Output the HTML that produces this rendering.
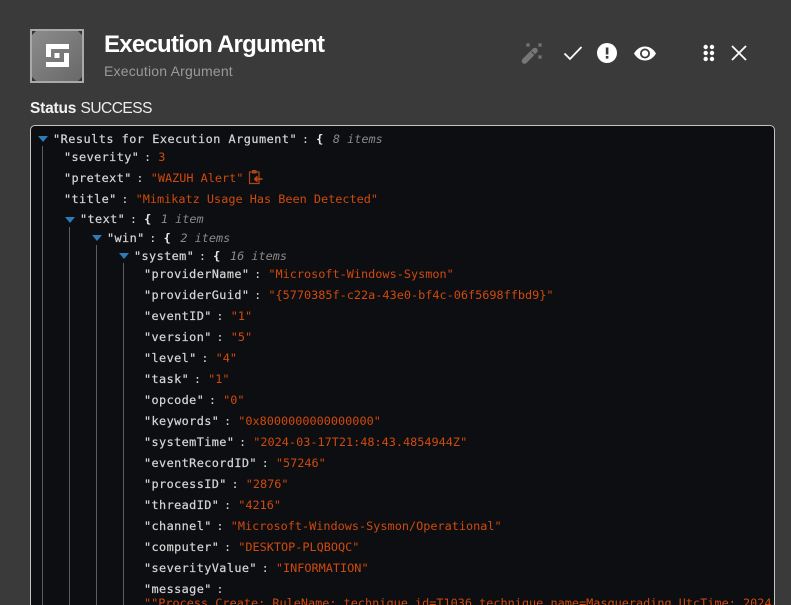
<!DOCTYPE html>
<html><head><meta charset="utf-8">
<style>
html,body{margin:0;padding:0;width:791px;height:605px;overflow:hidden;background:#3a3a3a}
body{position:relative;font-family:"Liberation Sans",sans-serif}
.abs{position:absolute}
#card{position:absolute;left:30px;top:125px;width:743px;height:500px;background:#0d0e11;border:1px solid #c4c4c4;border-radius:5px}
.l{position:absolute;white-space:pre;font-family:"DejaVu Sans Mono","Liberation Mono",monospace;font-size:11.85px;line-height:16px;height:16px;color:#d6d6d6}
.k{letter-spacing:.4px;-webkit-text-stroke:.2px #d6d6d6;margin-right:-2.5px}
.s,.n{color:#cf4a0e}
.i{color:#8a8a8a;font-style:italic;margin-left:2.5px}
.br{font-weight:700;color:#e8e8e8}
.t{position:absolute;width:1px;background:#5c5c5c}
.c{position:absolute;width:0;height:0;border-left:5.5px solid transparent;border-right:5.5px solid transparent;border-top:6px solid #2b7cb8}
</style></head><body>

<!-- logo tile -->
<div class="abs" style="left:30px;top:29px;width:50px;height:50px;border:2px solid #a9a9a9;background:linear-gradient(135deg,#8c8c8c,#686868)"></div>
<svg class="abs" style="left:30px;top:29px" width="54" height="54" viewBox="0 0 54 54">
<path d="M2 2h4l-4 4zM52 2v4l-4-4zM2 52v-4l4 4zM52 52h-4l4-4z" fill="#333"/>
<path d="M16 15h23v5H21v8h-5z M34 24h5v14H16v-5h18z" fill="#fff"/>
<rect x="24.500" y="24" width="5" height="5" fill="#fff"/>
</svg>

<!-- heading -->
<div class="abs" style="left:104px;top:30px;font-size:24px;line-height:30px;font-weight:700;color:#fff;white-space:pre;letter-spacing:-0.75px">Execution Argument</div>
<div class="abs" style="left:104px;top:62px;font-size:14px;line-height:18px;color:#9a9a9a;white-space:pre;letter-spacing:0.2px">Execution Argument</div>
<div class="abs" style="left:30px;top:100px;font-size:15.5px;line-height:18px;color:#eee;white-space:pre"><span style="font-weight:700;color:#f2f2f2;letter-spacing:-0.2px">Status</span> <span style="letter-spacing:-0.5px">SUCCESS</span></div>

<!-- toolbar icons -->
<svg class="abs" style="left:520px;top:41px" width="26" height="26" viewBox="0 0 26 26">
<path d="M4.500 20 15 9.500" fill="none" stroke="#777" stroke-width="5.500" stroke-linecap="round"/>
<path d="M11.500 10.500l4 4" stroke="#3a3a3a" stroke-width="1"/>
<g stroke="#777" stroke-width="1.500"><path d="M6.500 2.500l3 3M9.500 2.500l-3 3M18.500 2.500l3 3M21.500 2.500l-3 3M18.500 14.500l3 3M21.500 14.500l-3 3"/></g>
</svg>
<svg class="abs" style="left:562px;top:44px" width="22" height="18" viewBox="0 0 22 18">
<path d="M2.500 9.500 8 15 19.500 3" fill="none" stroke="#fff" stroke-width="1.800"/>
</svg>
<svg class="abs" style="left:597px;top:43px" width="20" height="20" viewBox="0 0 20 20">
<circle cx="10" cy="10" r="10" fill="#fff"/>
<rect x="8.800" y="4.500" width="2.600" height="7" fill="#3a3a3a"/>
<rect x="8.800" y="13" width="2.600" height="2.600" fill="#3a3a3a"/>
</svg>
<svg class="abs" style="left:634px;top:44px" width="22" height="18" viewBox="0 0 22 18">
<path d="M0 9.500C3 4.500 7 2.500 11 2.500S19 4.500 22 9.500c-3 5-7 7-11 7S3 14.500 0 9.500z" fill="#fff"/>
<circle cx="11" cy="9.500" r="5" fill="#3a3a3a"/>
<circle cx="11" cy="9.500" r="3.200" fill="#fff"/>
</svg>
<svg class="abs" style="left:702px;top:44px" width="14" height="18" viewBox="0 0 14 18">
<g fill="#fff"><circle cx="3.700" cy="3" r="2.200"/><circle cx="10" cy="3" r="2.200"/><circle cx="3.700" cy="9" r="2.200"/><circle cx="10" cy="9" r="2.200"/><circle cx="3.700" cy="15" r="2.200"/><circle cx="10" cy="15" r="2.200"/></g>
</svg>
<svg class="abs" style="left:730px;top:44px" width="18" height="18" viewBox="0 0 18 18">
<path d="M2 2l14 14M16 2 2 16" fill="none" stroke="#fff" stroke-width="1.800"/>
</svg>

<!-- card -->
<div id="card"></div>

<!-- tree lines -->
<div class="t" style="left:42px;top:146px;height:459px"></div>
<div class="t" style="left:69px;top:227px;height:378px"></div>
<div class="t" style="left:96px;top:245px;height:360px"></div>
<div class="t" style="left:123px;top:263px;height:342px"></div>

<!-- carets -->
<div class="c" style="left:38px;top:136px"></div>
<div class="c" style="left:65px;top:217px"></div>
<div class="c" style="left:92px;top:235px"></div>
<div class="c" style="left:119px;top:253px"></div>

<!-- json lines -->
<div class="l" style="left:53px;top:131px"><span class="k" style="letter-spacing:.5px">"Results for Execution Argument"</span> : <span class="br">{</span> <span class="i">8 items</span></div>
<div class="l" style="left:64px;top:149px"><span class="k">"severity"</span> : <span class="n">3</span></div>
<div class="l" style="left:64px;top:170px"><span class="k">"pretext"</span> : <span class="s">"WAZUH Alert"</span></div>
<svg class="abs" style="left:248px;top:169px" width="15" height="16" viewBox="0 0 15 16">
<path d="M1.500 3h9.500v11.500h-9.500z" fill="none" stroke="#a8481a" stroke-width="1.200"/>
<rect x="4" y="1" width="4.500" height="3.500" fill="#a8481a"/>
<path d="M6.500 10h8M6.500 10l3-2.500M6.500 10l3 2.500" fill="none" stroke="#c9480f" stroke-width="1.600"/>
</svg>
<div class="l" style="left:64px;top:191px"><span class="k">"title"</span> : <span class="s">"Mimikatz Usage Has Been Detected"</span></div>
<div class="l" style="left:80px;top:211px"><span class="k">"text"</span> : <span class="br">{</span> <span class="i">1 item</span></div>
<div class="l" style="left:107px;top:230px"><span class="k">"win"</span> : <span class="br">{</span> <span class="i">2 items</span></div>
<div class="l" style="left:134px;top:248px"><span class="k">"system"</span> : <span class="br">{</span> <span class="i">16 items</span></div>
<div class="l" style="left:144px;top:266px"><span class="k">"providerName"</span> : <span class="s">"Microsoft-Windows-Sysmon"</span></div>
<div class="l" style="left:144px;top:287px"><span class="k">"providerGuid"</span> : <span class="s">"{5770385f-c22a-43e0-bf4c-06f5698ffbd9}"</span></div>
<div class="l" style="left:144px;top:308px"><span class="k">"eventID"</span> : <span class="s">"1"</span></div>
<div class="l" style="left:144px;top:329px"><span class="k">"version"</span> : <span class="s">"5"</span></div>
<div class="l" style="left:144px;top:350px"><span class="k">"level"</span> : <span class="s">"4"</span></div>
<div class="l" style="left:144px;top:371px"><span class="k">"task"</span> : <span class="s">"1"</span></div>
<div class="l" style="left:144px;top:392px"><span class="k">"opcode"</span> : <span class="s">"0"</span></div>
<div class="l" style="left:144px;top:413px"><span class="k">"keywords"</span> : <span class="s">"0x8000000000000000"</span></div>
<div class="l" style="left:144px;top:434px"><span class="k">"systemTime"</span> : <span class="s">"2024-03-17T21:48:43.4854944Z"</span></div>
<div class="l" style="left:144px;top:455px"><span class="k">"eventRecordID"</span> : <span class="s">"57246"</span></div>
<div class="l" style="left:144px;top:476px"><span class="k">"processID"</span> : <span class="s">"2876"</span></div>
<div class="l" style="left:144px;top:497px"><span class="k">"threadID"</span> : <span class="s">"4216"</span></div>
<div class="l" style="left:144px;top:518px"><span class="k">"channel"</span> : <span class="s">"Microsoft-Windows-Sysmon/Operational"</span></div>
<div class="l" style="left:144px;top:539px"><span class="k">"computer"</span> : <span class="s">"DESKTOP-PLQBOQC"</span></div>
<div class="l" style="left:144px;top:560px"><span class="k">"severityValue"</span> : <span class="s">"INFORMATION"</span></div>
<div class="l" style="left:144px;top:581px"><span class="k">"message"</span> :</div>
<div class="abs" style="left:144px;top:595px;width:630px;height:10px;overflow:hidden">
<div class="l" style="left:0;top:0"><span class="s">""Process Create: RuleName: technique_id=T1036,technique_name=Masquerading UtcTime: 2024-03-</span></div>
</div>
</body></html>
